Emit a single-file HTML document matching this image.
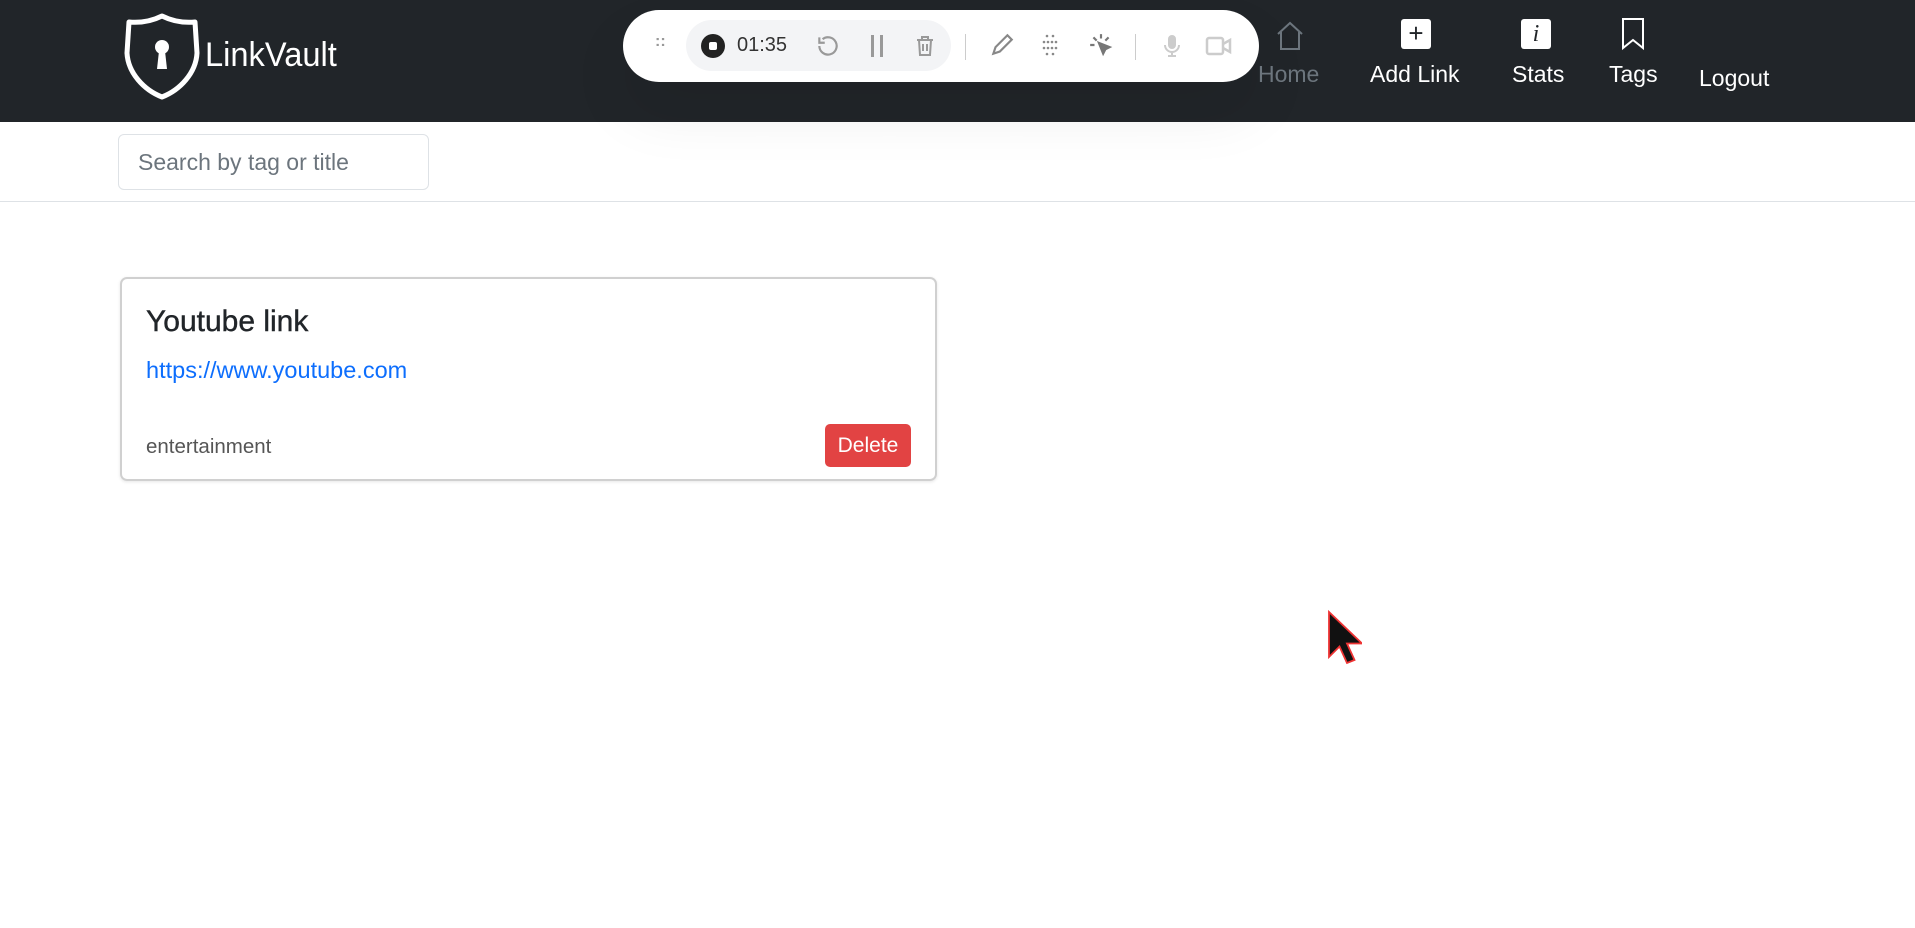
<!DOCTYPE html>
<html><head><meta charset="utf-8"><style>
*{box-sizing:border-box;margin:0;padding:0}
body{width:1915px;height:928px;background:#fff;font-family:"Liberation Sans",sans-serif;position:relative;overflow:hidden}
.hdr{position:absolute;left:0;top:0;width:1915px;height:122px;background:#212529}
.abs{position:absolute}
.nav{position:absolute;color:#fff;font-size:23px;white-space:nowrap}
.sep{position:absolute;left:0;top:201px;width:1915px;height:1px;background:#dee2e6}
</style></head><body>
<div class="hdr"></div>
<svg class="abs" style="left:122px;top:13px" width="80" height="88" viewBox="0 0 80 88">
<path d="M40 3 C30 8 18 10 7 9 L5 40 C6 60 22 77 40 84 C58 77 74 60 75 40 L73 9 C62 10 50 8 40 3Z" fill="none" stroke="#fff" stroke-width="5" stroke-linejoin="round"/>
<circle cx="40" cy="34" r="7" fill="#fff"/><path d="M37 38 L35 56 L45 56 L43 38Z" fill="#fff"/>
</svg>
<div class="nav" style="left:205px;top:36px;font-size:34px;transform:scaleX(0.96);transform-origin:left">LinkVault</div>
<div class="abs" style="left:623px;top:10px;width:636px;height:72px;background:#fff;border-radius:36px;box-shadow:0 30px 60px rgba(0,0,0,0.08)"></div>
<div class="abs" style="left:686px;top:20px;width:265px;height:51px;background:#f3f4f6;border-radius:26px"></div>
<div class="abs" style="left:655px;top:38px;width:14px;height:14px;color:#999;font-size:16px;font-weight:bold;line-height:7px">::</div>
<div class="abs" style="left:701px;top:34px;width:24px;height:24px;border-radius:50%;background:#222"><div style="position:absolute;left:8px;top:8px;width:8px;height:8px;background:#fff;border-radius:2px"></div></div>
<div class="abs" style="left:737px;top:34px;font-size:20px;color:#333">01:35</div>
<svg class="abs" style="left:815px;top:33px" width="26" height="26" viewBox="0 0 24 24" fill="none" stroke="#999" stroke-width="2"><path d="M4 12a8 8 0 1 0 3-6.3M4 4v5h5"/></svg>
<div class="abs" style="left:871px;top:35px;width:3px;height:22px;background:#999"></div><div class="abs" style="left:880px;top:35px;width:3px;height:22px;background:#999"></div>
<svg class="abs" style="left:913px;top:33px" width="24" height="26" viewBox="0 0 24 24" fill="none" stroke="#999" stroke-width="2"><path d="M4 6h16M9 6V3h6v3M6 6l1 15h10l1-15M10 10v7M14 10v7"/></svg>
<div class="abs" style="left:965px;top:34px;width:1px;height:26px;background:#ccc"></div>
<svg class="abs" style="left:989px;top:32px" width="26" height="26" viewBox="0 0 24 24" fill="none" stroke="#888" stroke-width="2"><path d="M4 20l2-6L17 3l4 4L10 18z"/></svg>
<svg class="abs" style="left:1039px;top:33px" width="22" height="26" viewBox="0 0 22 26" fill="#888"><circle cx="8" cy="3" r="1.3"/><circle cx="14" cy="3" r="1.3"/><circle cx="5" cy="9" r="1.3"/><circle cx="9" cy="9" r="1.3"/><circle cx="13" cy="9" r="1.3"/><circle cx="17" cy="9" r="1.3"/><circle cx="5" cy="15" r="1.3"/><circle cx="9" cy="15" r="1.3"/><circle cx="13" cy="15" r="1.3"/><circle cx="17" cy="15" r="1.3"/><circle cx="8" cy="21" r="1.3"/><circle cx="14" cy="21" r="1.3"/></svg>
<svg class="abs" style="left:1088px;top:32px" width="26" height="26" viewBox="0 0 24 24" fill="none" stroke="#777" stroke-width="2"><path d="M12 2v4M5 5l3 3M2 12h4M19 5l-3 3"/><path d="M10 10l10 4-4 2-2 4z" fill="#777"/></svg>
<div class="abs" style="left:1135px;top:34px;width:1px;height:26px;background:#ccc"></div>
<svg class="abs" style="left:1160px;top:32px" width="24" height="28" viewBox="0 0 24 24" fill="none" stroke="#ccc" stroke-width="2"><rect x="9" y="2" width="6" height="12" rx="3" fill="#ccc"/><path d="M5 11a7 7 0 0 0 14 0M12 18v4M8 22h8"/></svg>
<svg class="abs" style="left:1205px;top:34px" width="28" height="24" viewBox="0 0 28 24" fill="none" stroke="#ccc" stroke-width="2.5"><rect x="2" y="4" width="16" height="16" rx="2"/><path d="M18 10l7-4v12l-7-4"/></svg>
<svg class="abs" style="left:1275px;top:20px" width="30" height="32" viewBox="0 0 30 32" fill="none" stroke="#6c757d" stroke-width="2"><path d="M3 14L15 3l12 11M6 12v17h18V12"/></svg>
<div class="nav" style="left:1258px;top:61px;color:#6c757d">Home</div>
<div class="abs" style="left:1401px;top:19px;width:30px;height:30px;background:#fff;border-radius:3px;color:#212529;font-size:26px;line-height:28px;text-align:center">+</div>
<div class="nav" style="left:1370px;top:61px">Add Link</div>
<div class="abs" style="left:1521px;top:19px;width:30px;height:30px;background:#fff;border-radius:3px;color:#212529;font-size:24px;font-style:italic;font-family:'Liberation Serif',serif;line-height:30px;text-align:center">i</div>
<div class="nav" style="left:1512px;top:61px">Stats</div>
<svg class="abs" style="left:1620px;top:17px" width="26" height="34" viewBox="0 0 26 34" fill="none" stroke="#fff" stroke-width="2"><path d="M3 2h20v29l-10-8-10 8z"/></svg>
<div class="nav" style="left:1609px;top:61px">Tags</div>
<div class="nav" style="left:1699px;top:65px">Logout</div>
<div class="abs" style="left:118px;top:134px;width:311px;height:56px;border:1px solid #dee2e6;border-radius:6px;font-size:23px;color:#6c757d;padding:14px 0 0 19px;white-space:nowrap">Search by tag or title</div>
<div class="sep"></div>
<div class="abs" style="left:120px;top:277px;width:817px;height:204px;border:2px solid #d0d0d0;border-radius:7px;box-shadow:0 1px 3px rgba(0,0,0,0.1)">
<div class="abs" style="left:24px;top:26px;font-size:30px;color:#212529;-webkit-text-stroke:0.4px #212529">Youtube link</div>
<div class="abs" style="left:24px;top:78px;font-size:23.5px;color:#0d6efd">https://www.youtube.com</div>
<div class="abs" style="left:24px;top:156px;font-size:20.5px;color:#555">entertainment</div>
<div class="abs" style="left:703px;top:145px;width:86px;height:43px;background:#e24343;border-radius:5px;color:#fff;font-size:21px;text-align:center;line-height:43px">Delete</div>
</div>
<svg class="abs" style="left:1326px;top:609px" width="36" height="60" viewBox="0 0 24 40"><path d="M2 2v30l7-7 5 11 5-2-5-11h10z" fill="#111" stroke="#e33" stroke-width="1.2"/></svg>
</body></html>
